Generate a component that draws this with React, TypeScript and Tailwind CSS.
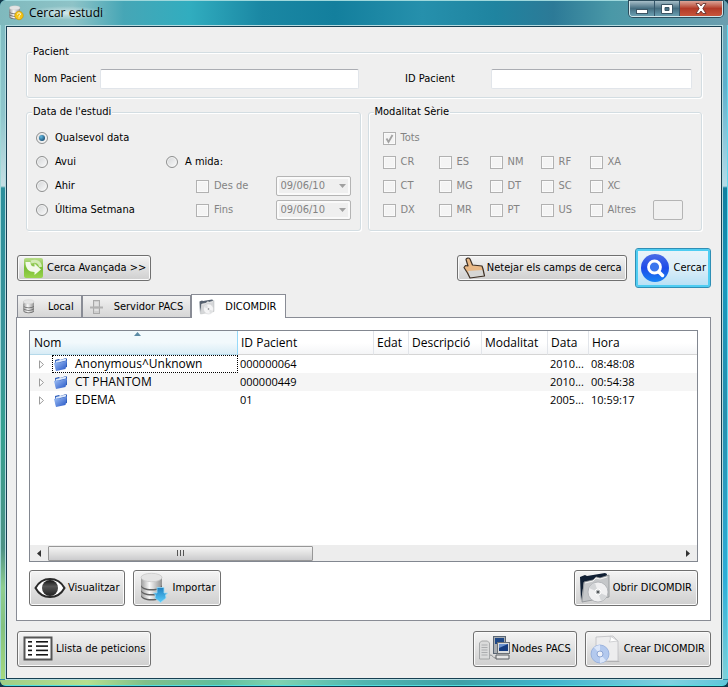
import type { ReactNode } from "react";

const box =
  "m-0 size-[13px] shrink-0 appearance-none border border-[#b1b1b1] bg-[#f4f4f4] shadow-[inset_0_0_0_1px_#fafafa]";
const radioLook =
  "m-0 flex size-3 shrink-0 appearance-none items-center justify-center rounded-full border border-[#8e8f8f] bg-linear-to-br from-[#d3d5d7] to-[#fbfbfb] shadow-[inset_0_0_0_1px_#f4f4f4] checked:before:size-[6px] checked:before:rounded-full checked:before:bg-radial-[at_35%_30%] checked:before:from-[#5fb8e0] checked:before:to-[#0b3257] checked:before:content-['']";

/* ---------- icons ---------- */

function Cylinders({ arrow, badge, size }: { arrow?: boolean; badge?: boolean; size: number }) {
  return (
    <svg width={size} height={size} viewBox="0 0 32 32" className="shrink-0" aria-hidden="true">
      <defs>
        <linearGradient id="steel" x1="0" x2="1">
          <stop offset="0" stopColor="#9b9b9b" />
          <stop offset=".4" stopColor="#fafafa" />
          <stop offset="1" stopColor="#8f8f8f" />
        </linearGradient>
        <linearGradient id="blueArrow" x1="0" x2="0" y1="0" y2="1">
          <stop offset="0" stopColor="#1f7fc0" />
          <stop offset="1" stopColor="#5ccdfb" />
        </linearGradient>
      </defs>
      {[20, 15, 10].map((y) => (
        <g key={y}>
          <path d={`M3 ${y}v4c0 2.500 4.500 4.500 10.500 4.500S24 ${y + 6.5} 24 ${y + 4}v-4z`} fill="#636363" />
          <path d={`M3 ${y - 1}v3.500c0 2.500 4.500 4.500 10.500 4.500S24 ${y + 5} 24 ${y + 2.5}v-3.500z`} fill="url(#steel)" />
        </g>
      ))}
      <path d="M3 5v5c0 2.500 4.500 4.500 10.500 4.500S24 12.500 24 10V5z" fill="url(#steel)" />
      <ellipse cx="13.500" cy="5.500" rx="10.500" ry="4.200" fill="#e4e4e4" stroke="#c4c4c4" strokeWidth=".7" />
      {arrow && (
        <path d="M19 15.500h7V21h3.500l-2 2 .5 3-5.500 4.500L17 26l.5-3-2-2H19z" fill="url(#blueArrow)" stroke="#9adcf8" strokeWidth=".8" />
      )}
      {badge && (
        <>
          <circle cx="22" cy="21" r="8.500" fill="#f5c516" stroke="#c08f08" strokeWidth="1.200" />
          <path d="M19 19c0-4 6-4 6-.5 0 2.500-3 2.200-3 5M22 25v1.800" fill="none" stroke="#fff" strokeWidth="2" />
        </>
      )}
    </svg>
  );
}

function DiscFolder({ size, faded }: { size: number; faded?: boolean }) {
  return (
    <svg width={size} height={size} viewBox="0 0 32 32" className={faded ? "shrink-0 opacity-70" : "shrink-0"} aria-hidden="true">
      <path d="M1 5l5-2 2 1 18-3 2 1-1 6L5 10 2 29z" fill="#101f33" />
      <path d="M3 30L5 10l9-2 3-3 4 1 9-3v22z" fill="#c5c7c9" stroke="#8c8f93" strokeWidth=".8" />
      <path d="M6 11l8-2 3-3 4 1 7-2" fill="none" stroke="#f4f4f4" />
      <circle cx="19" cy="20" r="10" fill="#f0f0f1" stroke="#acafb2" strokeWidth=".8" />
      <path d="M19 20L10 16a10 10 0 0 1 6-5zM19 20l9 4a10 10 0 0 1-6 5z" fill="#d4d6d8" />
      <circle cx="19" cy="20" r="3" fill="#c3c5c7" stroke="#fff" />
      <circle cx="19" cy="20" r="1.300" fill="#55585b" />
    </svg>
  );
}

function Folder() {
  return (
    <svg width="16" height="16" viewBox="0 0 16 16" className="shrink-0" aria-hidden="true">
      <defs>
        <linearGradient id="folderFront" x1="0" y1="0" x2="1" y2="1">
          <stop offset="0" stopColor="#a9c8f8" />
          <stop offset="1" stopColor="#1f51c4" />
        </linearGradient>
      </defs>
      <path d="M2 4l4-1 1 1 6-2 1 1v8L3 14z" fill="#2c5cb8" />
      <path d="M3 5l10-2.500v2L3 7z" fill="#dce8fb" />
      <path d="M1 7l5-1 1 .5L14 4.500 12.500 13 3 15z" fill="url(#folderFront)" />
    </svg>
  );
}

function Recycle() {
  return (
    <svg width="24" height="24" viewBox="0 0 24 24" className="shrink-0" aria-hidden="true">
      <defs>
        <linearGradient id="lime" x1="0" y1="0" x2="0" y2="1">
          <stop offset="0" stopColor="#b9dd8a" />
          <stop offset=".5" stopColor="#79bd35" />
          <stop offset="1" stopColor="#9ad44d" />
        </linearGradient>
      </defs>
      <rect x="2" y="2" width="19" height="20" rx="2" fill="url(#lime)" />
      <path d="M9 6c5-2 9 0 9.500 5" fill="none" stroke="#d3ebb5" strokeWidth="3" />
      <path d="M3.500 6h5c0 3 1 4.500 4 4.500V7.500l6.500 6-6.500 5.500v-3C7 16 3.500 13 3.500 6z" fill="#f3f9ea" />
    </svg>
  );
}

function Hand() {
  return (
    <svg width="24" height="24" viewBox="0 0 24 24" className="shrink-0" aria-hidden="true">
      <path d="M4 3.500C4 2 7 1.300 8 3l2.500 6L20 10l1 3 1.500 7L8 22l-2.500-5L2 11.500 3.500 9.500 6 10z" fill="#e8b886" />
      <path d="M6 15l14.500-1 2 6L8 22z" fill="#d6d6d4" />
      <path d="M4 3.500C4 2 7 1.300 8 3l2.500 6L20 10l1 3 1.500 7L8 22l-2.500-5L2 11.500 3.500 9.500 6 10z" fill="none" stroke="#3c3026" strokeWidth="1.200" strokeLinejoin="round" />
    </svg>
  );
}

function Lens() {
  return (
    <svg width="32" height="32" viewBox="0 0 32 32" className="shrink-0" aria-hidden="true">
      <defs>
        <linearGradient id="lensBlue" x1="0" y1="0" x2="0" y2="1">
          <stop offset="0" stopColor="#4a6ce6" />
          <stop offset=".5" stopColor="#1f4be8" />
          <stop offset="1" stopColor="#1583f5" />
        </linearGradient>
      </defs>
      <circle cx="15" cy="16" r="14" fill="url(#lensBlue)" />
      <circle cx="14.500" cy="15" r="6" fill="#3c76ee" stroke="#fff" strokeWidth="2.800" />
      <path d="M19 20l3.500 3.500" stroke="#fff" strokeWidth="3.500" strokeLinecap="round" />
    </svg>
  );
}

function Eye() {
  return (
    <svg width="32" height="32" viewBox="0 0 32 32" className="shrink-0" aria-hidden="true">
      <defs>
        <linearGradient id="iris" x1="0" y1="0" x2="0" y2="1">
          <stop offset="0" stopColor="#151515" />
          <stop offset=".4" stopColor="#555" />
          <stop offset="1" stopColor="#222" />
        </linearGradient>
      </defs>
      <path d="M1.500 16C8 4 24 4 30.500 16 24 28 8 28 1.500 16z" fill="#fff" stroke="#2a2a2a" strokeWidth="2" />
      <circle cx="16" cy="16" r="8" fill="url(#iris)" />
    </svg>
  );
}

function RequestList() {
  return (
    <svg width="32" height="32" viewBox="0 0 32 32" className="shrink-0" aria-hidden="true">
      <rect x="2.500" y="4.500" width="27" height="22" fill="#fff" stroke="#555" strokeWidth="2" />
      {[9, 13.3, 17.6, 22].map((y) => (
        <g key={y} fill="#161616">
          <rect x="6" y={y - 1} width="4" height="1.600" />
          <rect x="14" y={y - 1} width="12" height="1.600" />
        </g>
      ))}
    </svg>
  );
}

function Network() {
  return (
    <svg width="32" height="32" viewBox="0 0 32 32" className="shrink-0" aria-hidden="true">
      <path d="M1.500 10l2-2h6l2 2v16h-10z" fill="#dadbdb" stroke="#97999b" strokeWidth=".8" />
      <path d="M3.500 12h6M3.500 14.500h6M3.500 17h6M3.500 19.500h6M3.500 22h6" stroke="#abadaf" />
      <path d="M12 22c3 0 3 3 5 3h6" fill="none" stroke="#8b8d90" />
      <rect x="15.500" y="3.500" width="12" height="17" fill="#a8adb2" stroke="#596573" />
      <rect x="17" y="5" width="9" height="6" fill="#1c4686" />
      <rect x="19.500" y="9.500" width="12" height="11" fill="#dcdedf" stroke="#6c7176" />
      <rect x="21" y="11" width="9" height="7" fill="#153c80" />
      <path d="M21 11h9l-9 4z" fill="#6b93cf" />
      <path d="M18 22h13v4H18z" fill="#e6e6e6" stroke="#5b5f63" />
    </svg>
  );
}

function DiscPage() {
  return (
    <svg width="32" height="32" viewBox="0 0 32 32" className="shrink-0" aria-hidden="true">
      <path d="M13 29h17l-4-2z" fill="#a9a9a9" />
      <path d="M6 4l17-1 5 5v20H6z" fill="#ededee" stroke="#bcbdc0" strokeWidth=".8" />
      <path d="M20 3c1 3 0 5-1 6l9-1z" fill="#fff" stroke="#c2c3c6" strokeWidth=".7" />
      <circle cx="10" cy="21" r="9" fill="#b3c9ee" stroke="#8ea9da" strokeWidth=".8" />
      <path d="M10 21L4 14.500a9 9 0 0 1 6-2.500zM10 21l6 6.500a9 9 0 0 1-6 2.500z" fill="#dbe6f9" />
      <circle cx="10" cy="21" r="3" fill="#eef2fa" stroke="#7b97cc" strokeWidth=".8" />
    </svg>
  );
}

function ServerTower() {
  return (
    <svg width="16" height="16" viewBox="0 0 16 16" className="shrink-0" aria-hidden="true">
      <rect x="4.500" y="1.500" width="6" height="13" fill="#cfcfcf" stroke="#a9a9a9" />
      <path d="M5.500 4h4M5.500 6h4M5.500 11h4" stroke="#f2f2f2" />
      <rect x="1" y="7.500" width="13" height="2" fill="#b1b1b1" />
    </svg>
  );
}

/* ---------- controls ---------- */

function PushButton({ icon, children, small }: { icon: ReactNode; children: ReactNode; small?: boolean }) {
  return (
    <button
      type="button"
      className={`flex items-center rounded-[3px] border border-[#707070] bg-linear-to-b from-[#f4f4f4] from-0% via-[#dfdfdf] via-55% to-[#cfcfcf] pl-1 whitespace-nowrap shadow-[inset_0_0_0_1px_#fafafa] ${
        small ? "h-[26px] gap-px pr-1" : "h-9 gap-[2px] pr-[5px]"
      }`}
    >
      {icon}
      {children}
    </button>
  );
}

function Group({ title, className, children }: { title: string; className: string; children: ReactNode }) {
  return (
    <fieldset
      className={`min-w-0 rounded-[3px] border border-[#d3dde2] shadow-[inset_1px_1px_0_#fff,1px_1px_0_#fff] ${className}`}
    >
      <legend className="bg-[#efefef] px-px leading-[14px]">{title}</legend>
      {children}
    </fieldset>
  );
}

function Radio({ label, checked }: { label: string; checked?: boolean }) {
  return (
    <label className="flex items-center gap-[7px]">
      <input type="radio" name="data" defaultChecked={checked} className={radioLook} />
      {label}
    </label>
  );
}

function Check({ label, checked }: { label: string; checked?: boolean }) {
  return (
    <label className="flex items-center gap-[5px] text-[#838383]">
      <span className="relative flex">
        <input type="checkbox" disabled defaultChecked={checked} className={box} />
        {checked && (
          <svg viewBox="0 0 13 13" className="absolute inset-0 size-[13px]" aria-hidden="true">
            <path d="M3.500 6.500L5.500 10 9.500 3" fill="none" stroke="#a2a2a2" strokeWidth="1.800" />
          </svg>
        )}
      </span>
      {label}
    </label>
  );
}

function DateSelect({ label }: { label: string }) {
  return (
    <span className="relative flex">
      <select
        disabled
        aria-label={label}
        className="h-5 w-[75px] appearance-none rounded-[2px] border border-[#b4b4b4] bg-[#efefef] pl-1 text-[#838383] opacity-100 shadow-[inset_0_0_0_2px_#fafafa]"
      >
        <option>09/06/10</option>
      </select>
      <svg viewBox="0 0 7 4" className="absolute top-2 right-[5px] h-1 w-[7px]" aria-hidden="true">
        <path d="M0 0h7L3.500 4z" fill="#a0a0a0" />
      </svg>
    </span>
  );
}

const field =
  "h-5 min-w-0 rounded-[2px] border border-[#e1e5ea] border-t-[#abadb3] bg-white px-1 outline-none";

const modalities = [
  ["CR", "ES", "NM", "RF", "XA"],
  ["CT", "MG", "DT", "SC", "XC"],
  ["DX", "MR", "PT", "US", "Altres"],
];

const studies = [
  { name: "Anonymous^Unknown", id: "000000064", date: "2010...", time: "08:48:08" },
  { name: "CT PHANTOM", id: "000000449", date: "2010...", time: "00:54:38" },
  { name: "EDEMA", id: "01", date: "2005...", time: "10:59:17" },
];

const head =
  "h-6 border-r border-b border-r-[#e2e5ea] border-b-[#d5d5d5] p-0 pt-px pl-[3px] text-left font-normal last:border-r-0";

export default function App() {
  return (
    <div className="flex min-h-screen flex-col bg-[#12384a] pb-px font-['DejaVu_Sans_Condensed','DejaVu_Sans',sans-serif] text-[11px] leading-[14px] text-black">
      <div className="flex flex-1 flex-col overflow-hidden rounded-[6px] bg-[#268ba4]">
        <header className="flex h-[25px] items-start justify-between border-t border-[#9ed8dc] bg-[linear-gradient(90deg,#7fb9bd_0%,#8ec3c7_10%,#46a6b6_17%,#31adbf_26%,#1a87a3_36%,#137f9d_46%,#2690ac_58%,#1f84a0_68%,#2c7a97_76%,#4a98a7_84%,#6b9eaf_100%)] pl-2">
          <div className="flex h-6 items-center gap-px">
            <Cylinders badge size={16} />
            <h1 className="bg-[radial-gradient(closest-side,#ffffffa0,#ffffff00)] px-1 font-['Open_Sans',sans-serif] text-[12px]">
              Cercar estudi
            </h1>
          </div>
          <div className="mr-[5px] flex h-4 overflow-hidden rounded-b-[4px] border border-t-0 border-[#d3e6ea] shadow-[0_0_0_1px_#2c4c5c]">
            <button type="button" aria-label="Minimitza" className="flex w-[25px] items-center justify-center border-r border-[#35566a] bg-linear-to-b from-[#a8bfc9] via-[#456d80] via-50% to-[#6ba0b2]">
              <svg width="12" height="10" viewBox="0 0 12 10" aria-hidden="true">
                <rect x=".5" y="5.500" width="11" height="4" fill="#fff" stroke="#3c5564" />
              </svg>
            </button>
            <button type="button" aria-label="Maximitza" className="flex w-[25px] items-center justify-center border-r border-[#35566a] bg-linear-to-b from-[#a8bfc9] via-[#456d80] via-50% to-[#6ba0b2]">
              <svg width="12" height="12" viewBox="0 0 12 12" aria-hidden="true">
                <path d="M.5 1.500h11v9H.5z M4 4.500v3h4v-3z" fill="#fff" fillRule="evenodd" stroke="#3c5564" />
              </svg>
            </button>
            <button type="button" aria-label="Tanca" className="flex w-[42px] items-center justify-center bg-linear-to-b from-[#dba599] via-[#b23a28] via-50% to-[#c8553b]">
              <svg width="12" height="11" viewBox="0 0 12 11" aria-hidden="true">
                <path d="M1 .5h3l2 2.500L8 .5h3L7.800 5.500 11 10.500H8L6 8l-2 2.500H1l3.200-5z" fill="#fff" stroke="#5c2a26" strokeWidth=".8" />
              </svg>
            </button>
          </div>
        </header>

        <div className="flex flex-1">
          <div className="w-[5px] shrink-0 border-l border-[#9ed8d8] bg-[linear-gradient(180deg,#7fbcc2_0px,#8fc6cc_90px,#c5dfe4_161px,#2b8f9c_163px,#3b9499_50%,#35a090_62%,#4d9184_80%,#8fce90_86%,#84c280_92%,#a5d97f_100%)]" />
          <main className="mx-px mt-px flex min-w-0 flex-1 flex-col border border-[#173f52] bg-[#efefef] px-[10px] pt-[18px] pb-[11px] shadow-[0_0_0_1px_#b4dbe0]">
            <div className="flex flex-col gap-[7px] px-[9px]">
              <Group title="Pacient" className="px-[5px] pb-2">
                <div className="flex items-center pt-[10px]">
                  <label htmlFor="nom" className="w-[68px] pl-[2px] whitespace-nowrap">Nom Pacient</label>
                  <input id="nom" className={`${field} grow-[261] basis-0`} />
                  <label htmlFor="id" className="ml-[46px] w-[86px] whitespace-nowrap">ID Pacient</label>
                  <input id="id" className={`${field} mr-1 grow-[200] basis-0`} />
                </div>
              </Group>

              <div className="grid grid-cols-2 gap-[7px]">
                <Group title="Data de l'estudi" className="px-[5px] pb-2">
                  <div className="grid auto-rows-[24px] grid-cols-[130px_1fr] items-center pt-[7px] pr-1 pl-1">
                    <Radio label="Qualsevol data" checked />
                    <span />
                    <Radio label="Avui" />
                    <Radio label="A mida:" />
                    <Radio label="Ahir" />
                    <div className="flex items-center justify-between pl-[30px]">
                      <Check label="Des de" />
                      <DateSelect label="Des de" />
                    </div>
                    <Radio label="Última Setmana" />
                    <div className="flex items-center justify-between pl-[30px]">
                      <Check label="Fins" />
                      <DateSelect label="Fins" />
                    </div>
                  </div>
                </Group>

                <Group title="Modalitat Sèrie" className="px-[5px] pb-2">
                  <div className="grid auto-rows-[24px] grid-cols-[56px_51px_51px_49px_63px_30px] items-center pt-[7px] pl-[9px]">
                    <div className="col-span-6">
                      <Check label="Tots" checked />
                    </div>
                    {modalities.map((row) =>
                      row.map((m) => (
                        <div key={m} className={m === "XA" || m === "XC" ? "col-span-2" : ""}>
                          <Check label={m} />
                        </div>
                      )),
                    )}
                    <input
                      disabled
                      aria-label="Altres modalitats"
                      className="h-5 w-[30px] rounded-[2px] border border-[#b4b4b4] bg-[#f0f0f0]"
                    />
                  </div>
                </Group>
              </div>
            </div>

            <div className="mt-[17px] flex items-center">
              <PushButton small icon={<Recycle />}>Cerca Avançada &gt;&gt;</PushButton>
              <div className="ml-auto flex items-center gap-2">
                <PushButton small icon={<Hand />}>Netejar els camps de cerca</PushButton>
                <button
                  type="button"
                  className="flex h-10 items-center gap-[2px] rounded-[3px] border border-[#2f8fb5] bg-linear-to-b from-[#eaf4f9] via-[#dceef8] via-50% to-[#b4dff5] px-1 shadow-[inset_0_0_0_2px_#4fcdf2]"
                >
                  <Lens />
                  Cercar
                </button>
              </div>
            </div>

            <div className="mt-[6px] flex items-end" role="tablist">
              <button type="button" role="tab" aria-selected={false} className="flex h-[22px] items-center gap-[10px] border border-b-0 border-[#898c95] bg-linear-to-b from-[#f2f2f2] to-[#d6d6d6] px-1 pr-[7px]">
                <Cylinders size={16} />
                Local
              </button>
              <button type="button" role="tab" aria-selected={false} className="flex h-[22px] items-center gap-[9px] border border-b-0 border-[#898c95] bg-linear-to-b from-[#f2f2f2] to-[#d6d6d6] pr-[7px] pl-[6px]">
                <ServerTower />
                Servidor PACS
              </button>
              <button type="button" role="tab" aria-selected className="z-10 -mb-px flex h-6 items-center gap-[10px] border border-b-0 border-[#898c95] bg-white pr-[9px] pl-[7px]">
                <DiscFolder size={16} faded />
                DICOMDIR
              </button>
            </div>

            <section className="-ml-px flex flex-1 flex-col border border-[#898c95] bg-white px-3 pt-3 pb-[14px]" role="tabpanel" aria-label="DICOMDIR">
              <div className="flex min-h-40 flex-1 flex-col border border-[#828790]">
                <table className="w-full table-fixed border-separate border-spacing-0">
                  <colgroup>
                    <col className="w-[208px]" />
                    <col className="w-[136px]" />
                    <col className="w-[35px]" />
                    <col className="w-[73px]" />
                    <col className="w-[66px]" />
                    <col className="w-[41px]" />
                    <col />
                  </colgroup>
                  <thead className="bg-linear-to-b from-white from-50% to-[#f3f4f6] font-['Open_Sans',sans-serif] text-[12px]">
                    <tr>
                      <th scope="col" aria-sort="ascending" className="relative h-6 border-r border-b border-r-[#96d9f9] border-b-[#b5d9ea] bg-linear-to-b from-[#f2f9fc] from-50% to-[#d8ecf6] p-0 pt-px pl-1 text-left font-normal">
                        Nom
                        <svg viewBox="0 0 7 4" className="absolute top-px left-1/2 h-1 w-[7px]" aria-hidden="true">
                          <path d="M0 4L3.500 0 7 4z" fill="#5b8ba5" />
                        </svg>
                      </th>
                      <th scope="col" className={head}>ID Pacient</th>
                      <th scope="col" className={head}>Edat</th>
                      <th scope="col" className={head}>Descripció</th>
                      <th scope="col" className={head}>Modalitat</th>
                      <th scope="col" className={head}>Data</th>
                      <th scope="col" className={head}>Hora</th>
                    </tr>
                  </thead>
                  <tbody className="font-['Open_Sans',sans-serif] text-[11px]">
                    {studies.map((s, i) => (
                      <tr key={s.name} className="h-[18px] even:bg-[#f5f5f5]">
                        <td className="p-0">
                          <div className="flex items-center text-[12px]">
                            <button type="button" aria-label={`Desplega ${s.name}`} className="flex w-[22px] justify-center">
                              <svg width="5" height="9" viewBox="0 0 5 9" aria-hidden="true">
                                <path d="M.5.8v7.400L4.500 4.500z" fill="#fff" stroke="#9c9c9c" />
                              </svg>
                            </button>
                            <div
                              className={`flex h-[18px] flex-1 items-center gap-[6px] border border-dotted ${
                                i === 0 ? "border-black" : "border-transparent"
                              }`}
                            >
                              <Folder />
                              {s.name}
                            </div>
                          </div>
                        </td>
                        <td className="p-0 pl-[2px]">{s.id}</td>
                        <td />
                        <td />
                        <td />
                        <td className="p-0 pl-[2px]">{s.date}</td>
                        <td className="p-0 pl-[2px]">{s.time}</td>
                      </tr>
                    ))}
                  </tbody>
                </table>

                <div className="mt-auto flex h-4 items-center bg-[#ededed]">
                  <button type="button" aria-label="Desplaça a l'esquerra" className="flex w-[18px] justify-center">
                    <svg width="4" height="7" viewBox="0 0 4 7" aria-hidden="true">
                      <path d="M4 0v7L0 3.500z" fill="#333" />
                    </svg>
                  </button>
                  <div className="flex-1">
                    <div className="flex h-[15px] w-[42%] items-center justify-center gap-[2px] rounded-[1px] border border-[#979797] bg-linear-to-b from-[#f4f4f4] via-[#e0e0e0] via-50% to-[#cbcbcd]">
                      <i className="h-[6px] w-px bg-[#555]" />
                      <i className="h-[6px] w-px bg-[#555]" />
                      <i className="h-[6px] w-px bg-[#555]" />
                    </div>
                  </div>
                  <button type="button" aria-label="Desplaça a la dreta" className="flex w-[18px] justify-center">
                    <svg width="4" height="7" viewBox="0 0 4 7" aria-hidden="true">
                      <path d="M0 0v7l4-3.500z" fill="#333" />
                    </svg>
                  </button>
                </div>
              </div>

              <div className="mt-2 flex gap-2">
                <PushButton icon={<Eye />}>Visualitzar</PushButton>
                <PushButton icon={<Cylinders arrow size={32} />}>Importar</PushButton>
                <div className="ml-auto">
                  <PushButton icon={<DiscFolder size={32} />}>Obrir DICOMDIR</PushButton>
                </div>
              </div>
            </section>

            <div className="mt-[10px] flex gap-2">
              <PushButton icon={<RequestList />}>Llista de peticions</PushButton>
              <div className="ml-auto flex gap-2">
                <PushButton icon={<Network />}>Nodes PACS</PushButton>
                <PushButton icon={<DiscPage />}>Crear DICOMDIR</PushButton>
              </div>
            </div>
          </main>
          <div className="w-[5px] shrink-0 border-r border-[#5edaf0] bg-[linear-gradient(180deg,#6fa3b3_0px,#5fb0cc_60px,#b5dbe8_161px,#127f9f_163px,#1b98bd_40%,#2a8fae_60%,#2faed8_85%,#7fd0d8_100%)]" />
        </div>
        <div className="mt-px h-[6px] shrink-0 border-b border-[#4fe0e0] bg-[linear-gradient(90deg,#9fce86_0%,#b5e08f_12%,#7fc08a_20%,#5fbf9d_30%,#7fd3b0_38%,#4fb6b0_50%,#3fa0a6_63%,#3fb4cc_75%,#7fd0e0_92%,#5fc6da_100%)]" />
      </div>
    </div>
  );
}
